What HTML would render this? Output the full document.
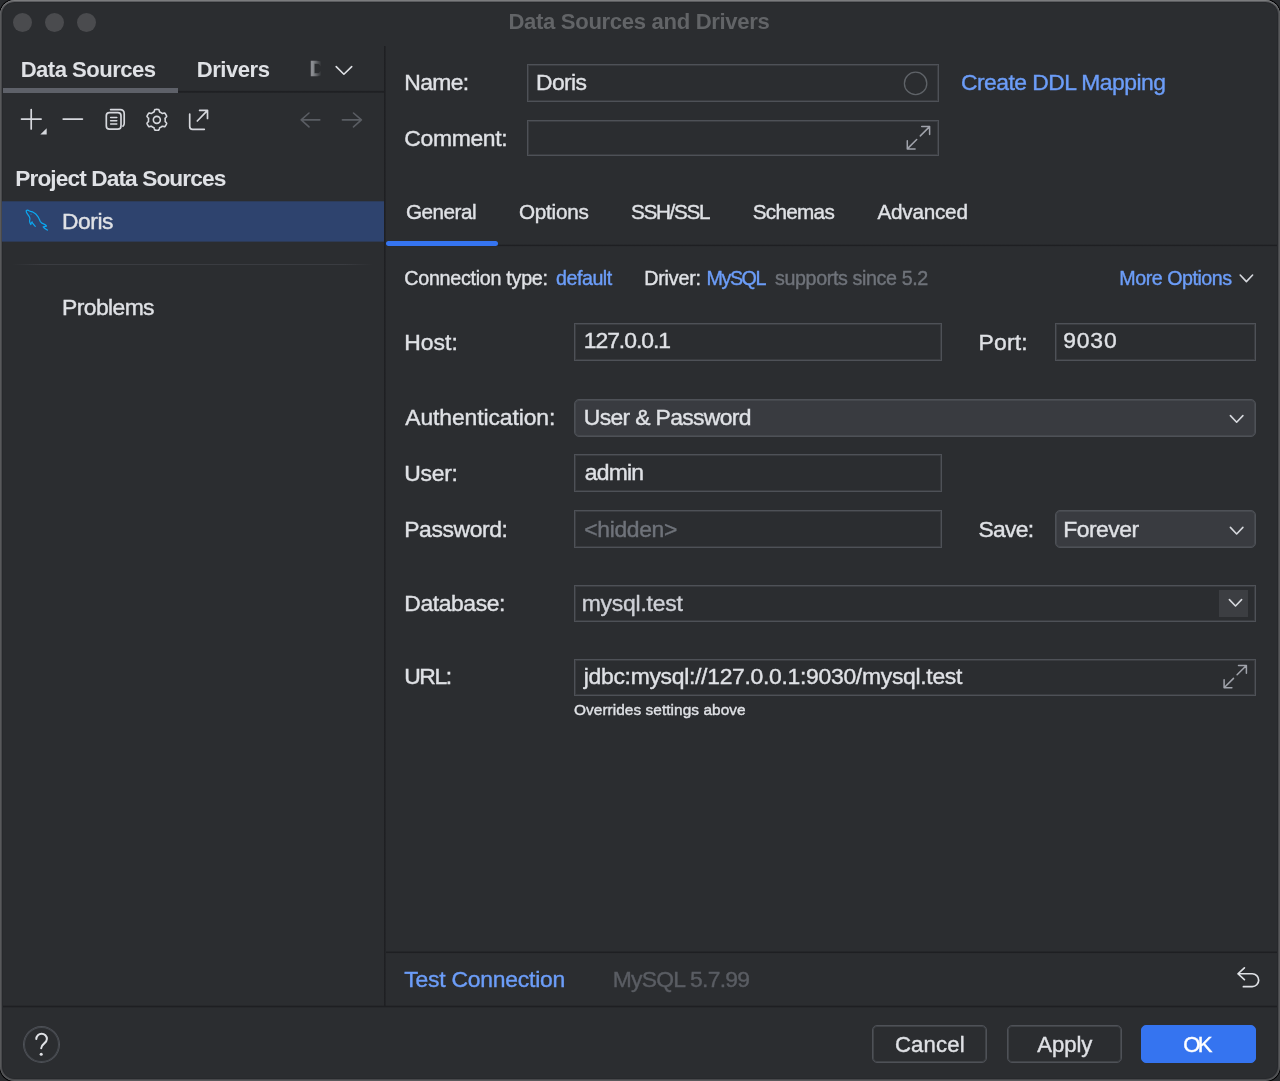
<!DOCTYPE html>
<html lang="en"><head><meta charset="utf-8"><title>Data Sources and Drivers</title>
<style>
html,body{margin:0;padding:0}
body{width:1280px;height:1081px;overflow:hidden;background:#292b2e;font-family:"Liberation Sans",sans-serif;position:relative}
#win{position:absolute;left:0;top:0;width:1280px;height:1081px;box-sizing:border-box;background:#2b2d30;border-radius:14.5px;overflow:hidden;box-shadow:0 0 0 1px #050506}
#win:after{content:"";position:absolute;left:0;top:0;right:0;bottom:0;border-radius:14.5px;box-sizing:border-box;pointer-events:none;box-shadow:inset 0 1px 0 0 #7b7c7e,inset 0 2px 0 0 #5b5c5f,inset 0 0 0 1px #58595b,inset 0 0 0 2px #47484b,inset 0 0 0 3px #27292c}
.t{position:absolute;white-space:nowrap;display:block;-webkit-text-stroke:0.4px currentColor;-webkit-font-smoothing:antialiased}
#txt{position:absolute;left:0;top:0;width:1280px;height:1081px;will-change:transform;z-index:4}
.a{position:absolute;box-sizing:border-box}
.in{position:absolute;box-sizing:border-box;border:1px solid #4e5157;background:#2b2d30;box-shadow:inset 0 0 0 1px rgba(78,81,87,.42)}
.dd{position:absolute;box-sizing:border-box;border:1px solid #4e5157;background:#393b40;border-radius:5px;box-shadow:inset 0 0 0 1px rgba(78,81,87,.6)}
.btn{position:absolute;box-sizing:border-box;border:1px solid #4e5157;border-radius:5px;background:#2b2d30;box-shadow:inset 0 0 0 1px rgba(78,81,87,.6)}
svg{position:absolute;overflow:visible;z-index:3}
</style></head>
<body>
<div id="win">
<div class="a" style="left:12.70px;top:12.70px;width:19.20px;height:19.20px;background:#4a4b4e;border-radius:50%"></div>
<div class="a" style="left:44.80px;top:12.70px;width:19.20px;height:19.20px;background:#4a4b4e;border-radius:50%"></div>
<div class="a" style="left:76.65px;top:12.70px;width:19.20px;height:19.20px;background:#4a4b4e;border-radius:50%"></div>
<div class="a" style="left:0.00px;top:90.00px;width:384.00px;height:3.00px;background:linear-gradient(180deg,rgba(30,31,34,0.15) 0 1px,rgba(30,31,34,0.95) 1px 2px,rgba(30,31,34,0.7) 2px 3px)"></div>
<div class="a" style="left:0.00px;top:88.40px;width:177.50px;height:4.20px;background:#5e6169;"></div>
<div class="a" style="left:383.00px;top:46.00px;width:3.00px;height:960.00px;background:linear-gradient(90deg,rgba(30,31,34,0) 0 1px,rgba(30,31,34,0.95) 1px 2px,rgba(30,31,34,0.6) 2px 3px)"></div>
<div class="a" style="left:2.00px;top:202.00px;width:382.00px;height:39.00px;background:#2e436e;z-index:2;box-shadow:0 -1px 0 rgba(46,67,110,.7),0 1px 0 rgba(46,67,110,.6)"></div>
<div class="a" style="left:12.00px;top:264.20px;width:361.00px;height:1.20px;background:linear-gradient(90deg,rgba(57,59,64,0) 0,#3a3c41 8%,#3a3c41 92%,rgba(57,59,64,0) 100%);"></div>
<div class="in" style="left:526.50px;top:63.75px;width:412.70px;height:38.45px;"></div>
<div class="in" style="left:526.50px;top:120.00px;width:412.70px;height:36.40px;"></div>
<div class="in" style="left:574.30px;top:323.20px;width:367.90px;height:37.80px;"></div>
<div class="in" style="left:1054.50px;top:323.20px;width:201.50px;height:37.80px;"></div>
<div class="dd" style="left:574.30px;top:398.50px;width:681.70px;height:38.00px;"></div>
<div class="in" style="left:574.30px;top:454.40px;width:367.90px;height:37.80px;"></div>
<div class="in" style="left:574.30px;top:510.40px;width:367.90px;height:37.80px;"></div>
<div class="dd" style="left:1054.50px;top:510.30px;width:201.50px;height:38.20px;"></div>
<div class="in" style="left:574.30px;top:585.30px;width:681.70px;height:36.70px;"></div>
<div class="a" style="left:1219.20px;top:590.00px;width:28.80px;height:27.30px;background:#3c3e42;"></div>
<div class="in" style="left:574.30px;top:659.20px;width:681.70px;height:36.80px;"></div>
<div class="a" style="left:386.00px;top:244.00px;width:894.00px;height:3.00px;background:linear-gradient(180deg,rgba(30,31,34,0.35) 0 1px,rgba(30,31,34,1) 1px 2px,rgba(30,31,34,0.15) 2px 3px)"></div>
<div class="a" style="left:386.00px;top:241.30px;width:111.80px;height:5.20px;background:#3574f0;border-radius:2.6px"></div>
<div class="a" style="left:386.00px;top:951.00px;width:894.00px;height:3.00px;background:linear-gradient(180deg,rgba(30,31,34,0.5) 0 1px,rgba(30,31,34,1) 1px 2px,rgba(30,31,34,0.1) 2px 3px)"></div>
<div class="a" style="left:0.00px;top:1005.00px;width:1280.00px;height:3.00px;background:linear-gradient(180deg,rgba(30,31,34,0.35) 0 1px,rgba(30,31,34,1) 1px 2px,rgba(30,31,34,0.35) 2px 3px)"></div>
<div class="btn" style="left:872.10px;top:1025.30px;width:115.10px;height:38.10px;"></div>
<div class="btn" style="left:1006.70px;top:1025.30px;width:114.90px;height:38.10px;"></div>
<div class="btn" style="left:1140.90px;top:1025.30px;width:115.20px;height:38.10px;background:#3574f0;border-color:#3574f0;box-shadow:none"></div>
<div class="a" style="left:23.00px;top:1025.70px;width:37.00px;height:37.10px;border:1px solid #4e5157;border-radius:50%;box-shadow:inset 0 0 0 1px rgba(78,81,87,.8)"></div>
<svg style="left:0;top:0" width="1280" height="1081" viewBox="0 0 1280 1081" fill="none" stroke-linecap="round" stroke-linejoin="round" ><path d="M21.5 119.1H41.1M31.2 109.5V128.9" stroke="#d6d8dd" stroke-width="1.7" fill="none" /><path d="M46.7 128.2V134.5H40.3Z" fill="#d6d8dd" stroke="none"/><path d="M63.2 119.1H82.4" stroke="#d6d8dd" stroke-width="1.7" fill="none" /><path d="M109.5 112.55H117.8A3.2 3.2 0 0 1 121 115.75V126A3.2 3.2 0 0 1 117.8 129.2H109.5A3.2 3.2 0 0 1 106.3 126V115.75A3.2 3.2 0 0 1 109.5 112.55Z" stroke="#d6d8dd" stroke-width="1.7" fill="none" /><path d="M110.6 109.6H120.4A3.8 3.8 0 0 1 124.2 113.4V123.6Q124.2 125.2 123 126.2" stroke="#d6d8dd" stroke-width="1.7" fill="none" /><path d="M110.6 117.5H116.8M110.6 120.7H116.8M110.6 123.9H116.8" stroke="#d6d8dd" stroke-width="1.5" fill="none" /><path d="M165.18 119.85 L165.18 119.63 L165.17 119.41 L165.15 119.19 L165.13 118.98 L165.11 118.76 L165.08 118.54 L165.04 118.33 L165.26 118.06 L165.59 117.75 L165.91 117.42 L166.22 117.07 L166.51 116.70 L166.68 116.36 L166.59 116.11 L166.48 115.85 L166.38 115.60 L166.26 115.35 L166.14 115.11 L166.01 114.86 L165.88 114.62 L165.74 114.39 L165.59 114.16 L165.44 113.93 L165.28 113.71 L165.12 113.49 L164.95 113.27 L164.78 113.06 L164.39 113.04 L163.93 113.11 L163.48 113.20 L163.03 113.32 L162.60 113.44 L162.25 113.50 L162.08 113.36 L161.91 113.23 L161.74 113.09 L161.56 112.97 L161.38 112.85 L161.19 112.73 L161.01 112.62 L160.81 112.51 L160.62 112.41 L160.42 112.31 L160.23 112.22 L160.03 112.14 L159.82 112.05 L159.62 111.98 L159.49 111.65 L159.39 111.22 L159.26 110.77 L159.12 110.33 L158.95 109.89 L158.73 109.57 L158.46 109.53 L158.19 109.49 L157.92 109.46 L157.65 109.43 L157.38 109.41 L157.10 109.40 L156.83 109.40 L156.56 109.40 L156.28 109.41 L156.01 109.43 L155.74 109.46 L155.47 109.49 L155.20 109.53 L154.93 109.57 L154.71 109.89 L154.54 110.33 L154.40 110.77 L154.27 111.22 L154.17 111.65 L154.04 111.98 L153.84 112.05 L153.63 112.14 L153.43 112.22 L153.24 112.31 L153.04 112.41 L152.85 112.51 L152.66 112.62 L152.47 112.73 L152.28 112.85 L152.10 112.97 L151.92 113.09 L151.75 113.23 L151.58 113.36 L151.41 113.50 L151.06 113.44 L150.63 113.32 L150.18 113.20 L149.73 113.11 L149.27 113.04 L148.88 113.06 L148.71 113.27 L148.54 113.49 L148.38 113.71 L148.22 113.93 L148.07 114.16 L147.92 114.39 L147.78 114.62 L147.65 114.86 L147.52 115.11 L147.40 115.35 L147.28 115.60 L147.18 115.85 L147.07 116.11 L146.98 116.36 L147.15 116.70 L147.44 117.07 L147.75 117.42 L148.07 117.75 L148.40 118.06 L148.62 118.33 L148.58 118.54 L148.55 118.76 L148.53 118.98 L148.51 119.19 L148.49 119.41 L148.48 119.63 L148.48 119.85 L148.48 120.07 L148.49 120.29 L148.51 120.51 L148.53 120.72 L148.55 120.94 L148.58 121.16 L148.62 121.37 L148.40 121.64 L148.07 121.95 L147.75 122.28 L147.44 122.63 L147.15 123.00 L146.98 123.34 L147.07 123.59 L147.18 123.85 L147.28 124.10 L147.40 124.35 L147.52 124.59 L147.65 124.84 L147.78 125.07 L147.92 125.31 L148.07 125.54 L148.22 125.77 L148.38 125.99 L148.54 126.21 L148.71 126.43 L148.88 126.64 L149.27 126.66 L149.73 126.59 L150.18 126.50 L150.63 126.38 L151.06 126.26 L151.41 126.20 L151.58 126.34 L151.75 126.47 L151.92 126.61 L152.10 126.73 L152.28 126.85 L152.47 126.97 L152.66 127.08 L152.85 127.19 L153.04 127.29 L153.24 127.39 L153.43 127.48 L153.63 127.56 L153.84 127.65 L154.04 127.72 L154.17 128.05 L154.27 128.48 L154.40 128.93 L154.54 129.37 L154.71 129.81 L154.93 130.13 L155.20 130.17 L155.47 130.21 L155.74 130.24 L156.01 130.27 L156.28 130.29 L156.56 130.30 L156.83 130.30 L157.10 130.30 L157.38 130.29 L157.65 130.27 L157.92 130.24 L158.19 130.21 L158.46 130.17 L158.73 130.13 L158.95 129.81 L159.12 129.37 L159.26 128.93 L159.39 128.48 L159.49 128.05 L159.62 127.72 L159.82 127.65 L160.03 127.56 L160.23 127.48 L160.42 127.39 L160.62 127.29 L160.81 127.19 L161.01 127.08 L161.19 126.97 L161.38 126.85 L161.56 126.73 L161.74 126.61 L161.91 126.47 L162.08 126.34 L162.25 126.20 L162.60 126.26 L163.03 126.38 L163.48 126.50 L163.93 126.59 L164.39 126.66 L164.78 126.64 L164.95 126.43 L165.12 126.21 L165.28 125.99 L165.44 125.77 L165.59 125.54 L165.74 125.31 L165.88 125.07 L166.01 124.84 L166.14 124.59 L166.26 124.35 L166.38 124.10 L166.48 123.85 L166.59 123.59 L166.68 123.34 L166.51 123.00 L166.22 122.63 L165.91 122.28 L165.59 121.95 L165.26 121.64 L165.04 121.37 L165.08 121.16 L165.11 120.94 L165.13 120.72 L165.15 120.51 L165.17 120.29 L165.18 120.07Z" stroke="#d6d8dd" stroke-width="1.6" fill="none" /><circle cx="156.83" cy="119.85" r="3.5" stroke="#d6d8dd" stroke-width="1.6"/><path d="M189.7 114V126.4A2.9 2.9 0 0 0 192.6 129.3H204.3" stroke="#d6d8dd" stroke-width="1.7" fill="none" /><path d="M197.3 121L207.5 110.4M199.6 110.4H207.5V118.4" stroke="#d6d8dd" stroke-width="1.7" fill="none" /><path d="M319.8 119.9H301.2M309 113L301.2 119.9L309 126.9" stroke="#5a5d63" stroke-width="1.6" fill="none" /><path d="M342.4 119.9H361.4M353.5 113L361.4 119.9L353.5 126.9" stroke="#5a5d63" stroke-width="1.6" fill="none" /><path d="M336.2 66.6L343.9 74.2L351.7 66.6" stroke="#dfe1e5" stroke-width="1.6" fill="none" /><circle cx="915.6" cy="83.4" r="11.2" stroke="#5f6368" stroke-width="1.3"/><path d="M921.7 126.6H929.6V134.4M929.6 126.6L920.3000000000001 135.9M907.3000000000001 140.79999999999998V148.9H915.1M907.3000000000001 148.9L916.7 139.5" stroke="#a0a3ab" stroke-width="1.5" fill="none" /><path d="M1238.5 665.5H1246.4V673.3M1246.4 665.5L1237.1000000000001 674.8M1224.1000000000001 679.7V687.8H1231.9M1224.1000000000001 687.8L1233.5 678.4" stroke="#a0a3ab" stroke-width="1.5" fill="none" /><path d="M1230.4 415.6L1236.65 422.2L1242.9 415.6" stroke="#d6d8dd" stroke-width="1.6" fill="none" /><path d="M1230.4 527.4L1236.65 534.0L1242.9 527.4" stroke="#d6d8dd" stroke-width="1.6" fill="none" /><path d="M1229.4 599.6L1235.5 606.0L1241.6 599.6" stroke="#d6d8dd" stroke-width="1.6" fill="none" /><path d="M1240.2 275.0L1246.4 281.6L1252.6 275.0" stroke="#d6d8dd" stroke-width="1.6" fill="none" /><path d="M1244.4 967.8L1238 973.75L1244.4 979.7M1238 973.75H1252.2A6.45 6.45 0 0 1 1252.2 986.65H1243.4" stroke="#dfe1e5" stroke-width="1.7" fill="none" /><path d="M36.3 1038.9A5.3 5.3 0 0 1 46.9 1039C46.9 1043.6 41.2 1043.6 41.2 1048.2" stroke="#dfe1e5" stroke-width="2" fill="none" /><circle cx="41.2" cy="1054.2" r="1.55" fill="#dfe1e5" stroke="none"/><path d="M25.6 210.3C26.4 209.2 27.6 209.4 28.6 210.2C30 211.2 31.6 211.2 33 211.9C35 212.9 36.8 214.6 38 216.4C39.2 218.2 39.8 220.2 40.5 221.6C41.3 223.1 42.8 223.8 44.4 224.4C45.6 224.9 46.6 225.6 47 226.4L43.5 227.2C44.6 228.6 46.4 229.6 48 230.6M25.6 210.3C25.6 211.4 26.1 212.4 26.7 213.3C27.6 214.6 28.6 215.6 29.1 216.8C29.6 217.9 29.8 218.6 29.5 219.6C29.2 220.6 29 221.2 29.4 222.2C29.7 223.1 30 223.9 30.5 224.8C30.7 223.6 31.1 222.7 31.8 221.9C32 222.8 32.5 223.5 33 224.1C33.7 225 34.4 225.9 35.2 226.7" stroke="#0ba7f0" stroke-width="1.3" fill="none" transform="translate(36.6 220) scale(0.95) translate(-36.6 -220)"/><circle cx="31" cy="214.2" r="0.6" fill="#2b78b8" stroke="none"/></svg>
<span class="t" style="left:309.6px;top:55.6px;font-size:22.3px;line-height:26px;font-weight:700;width:11.6px;overflow:hidden;color:#8b8d92;-webkit-mask-image:linear-gradient(90deg,#000 25%,transparent 105%);mask-image:linear-gradient(90deg,#000 25%,transparent 105%)">D</span>
<div id="txt">
<span class="t" style="left:508.50px;top:7px;font-size:22.1px;line-height:29px;letter-spacing:-0.332px;color:#626467;font-weight:700;-webkit-text-stroke:0">Data Sources and Drivers</span>
<span class="t" style="left:20.70px;top:55px;font-size:22.1px;line-height:29px;letter-spacing:-0.539px;color:#dfe1e5;font-weight:700;-webkit-text-stroke:0">Data Sources</span>
<span class="t" style="left:196.70px;top:55px;font-size:22.1px;line-height:29px;letter-spacing:-0.477px;color:#dfe1e5;font-weight:700;-webkit-text-stroke:0">Drivers</span>
<span class="t" style="left:15.25px;top:163px;font-size:22.7px;line-height:30px;letter-spacing:-0.906px;color:#dfe1e5;font-weight:700;-webkit-text-stroke:0">Project Data Sources</span>
<span class="t" style="left:62.10px;top:206px;font-size:22.8px;line-height:30px;letter-spacing:-0.450px;color:#dfe1e5">Doris</span>
<span class="t" style="left:62.10px;top:292px;font-size:22.9px;line-height:30px;letter-spacing:-0.605px;color:#dfe1e5">Problems</span>
<span class="t" style="left:404.25px;top:67px;font-size:22.9px;line-height:30px;letter-spacing:-0.640px;color:#dfe1e5">Name:</span>
<span class="t" style="left:536.00px;top:67px;font-size:22.9px;line-height:30px;letter-spacing:-0.617px;color:#dfe1e5">Doris</span>
<span class="t" style="left:404.25px;top:123px;font-size:22.9px;line-height:30px;letter-spacing:-0.317px;color:#dfe1e5">Comment:</span>
<span class="t" style="left:961.00px;top:67px;font-size:22.9px;line-height:30px;letter-spacing:-0.547px;color:#6c9df8">Create DDL Mapping</span>
<span class="t" style="left:406.00px;top:198px;font-size:20.7px;line-height:27px;letter-spacing:-0.500px;color:#dfe1e5">General</span>
<span class="t" style="left:519.00px;top:198px;font-size:20.7px;line-height:27px;letter-spacing:-0.242px;color:#dfe1e5">Options</span>
<span class="t" style="left:631.00px;top:198px;font-size:20.7px;line-height:27px;letter-spacing:-1.314px;color:#dfe1e5">SSH/SSL</span>
<span class="t" style="left:752.70px;top:198px;font-size:20.7px;line-height:27px;letter-spacing:-0.699px;color:#dfe1e5">Schemas</span>
<span class="t" style="left:877.40px;top:198px;font-size:20.7px;line-height:27px;letter-spacing:-0.215px;color:#dfe1e5">Advanced</span>
<span class="t" style="left:404.25px;top:265px;font-size:19.7px;line-height:26px;letter-spacing:-0.269px;color:#dfe1e5">Connection type:</span>
<span class="t" style="left:556.00px;top:265px;font-size:19.7px;line-height:26px;letter-spacing:-0.482px;color:#6c9df8">default</span>
<span class="t" style="left:644.20px;top:265px;font-size:19.7px;line-height:26px;letter-spacing:-0.183px;color:#dfe1e5">Driver:</span>
<span class="t" style="left:706.60px;top:265px;font-size:19.7px;line-height:26px;letter-spacing:-1.472px;color:#6c9df8">MySQL</span>
<span class="t" style="left:775.00px;top:265px;font-size:19.7px;line-height:26px;letter-spacing:-0.384px;color:#6f737a">supports since 5.2</span>
<span class="t" style="left:1119.30px;top:265px;font-size:19.7px;line-height:26px;letter-spacing:-0.484px;color:#6c9df8">More Options</span>
<span class="t" style="left:404.25px;top:327px;font-size:22.9px;line-height:30px;letter-spacing:0.046px;color:#dfe1e5">Host:</span>
<span class="t" style="left:583.75px;top:325px;font-size:22.9px;line-height:30px;letter-spacing:-1.029px;color:#dfe1e5">127.0.0.1</span>
<span class="t" style="left:978.60px;top:327px;font-size:22.9px;line-height:30px;letter-spacing:0.155px;color:#dfe1e5">Port:</span>
<span class="t" style="left:1063.20px;top:325px;font-size:22.9px;line-height:30px;letter-spacing:0.836px;color:#dfe1e5">9030</span>
<span class="t" style="left:405.25px;top:402px;font-size:22.9px;line-height:30px;letter-spacing:-0.095px;color:#dfe1e5">Authentication:</span>
<span class="t" style="left:583.75px;top:402px;font-size:22.9px;line-height:30px;letter-spacing:-0.649px;color:#dfe1e5">User &amp; Password</span>
<span class="t" style="left:404.25px;top:458px;font-size:22.9px;line-height:30px;letter-spacing:-0.270px;color:#dfe1e5">User:</span>
<span class="t" style="left:584.75px;top:457px;font-size:22.9px;line-height:30px;letter-spacing:-0.779px;color:#dfe1e5">admin</span>
<span class="t" style="left:404.25px;top:514px;font-size:22.9px;line-height:30px;letter-spacing:-0.407px;color:#dfe1e5">Password:</span>
<span class="t" style="left:584.25px;top:514px;font-size:22.9px;line-height:30px;letter-spacing:-0.337px;color:#6f737a">&lt;hidden&gt;</span>
<span class="t" style="left:978.60px;top:514px;font-size:22.9px;line-height:30px;letter-spacing:-0.769px;color:#dfe1e5">Save:</span>
<span class="t" style="left:1063.20px;top:514px;font-size:22.9px;line-height:30px;letter-spacing:-0.474px;color:#dfe1e5">Forever</span>
<span class="t" style="left:404.25px;top:588px;font-size:22.9px;line-height:30px;letter-spacing:-0.405px;color:#dfe1e5">Database:</span>
<span class="t" style="left:581.75px;top:588px;font-size:22.9px;line-height:30px;letter-spacing:-0.213px;color:#ced0d6">mysql.test</span>
<span class="t" style="left:404.25px;top:661px;font-size:22.9px;line-height:30px;letter-spacing:-1.431px;color:#dfe1e5">URL:</span>
<span class="t" style="left:583.75px;top:661px;font-size:22.9px;line-height:30px;letter-spacing:-0.290px;color:#dfe1e5">jdbc:mysql://127.0.0.1:9030/mysql.test</span>
<span class="t" style="left:574.00px;top:699px;font-size:15.4px;line-height:21px;letter-spacing:0.058px;color:#dfe1e5">Overrides settings above</span>
<span class="t" style="left:404.30px;top:964px;font-size:22.9px;line-height:30px;letter-spacing:-0.222px;color:#6c9df8">Test Connection</span>
<span class="t" style="left:612.70px;top:964px;font-size:22.9px;line-height:30px;letter-spacing:-0.735px;color:#5a5d63">MySQL 5.7.99</span>
<span class="t" style="left:895.00px;top:1030px;font-size:22.1px;line-height:29px;letter-spacing:0.167px;color:#dfe1e5">Cancel</span>
<span class="t" style="left:1037.20px;top:1030px;font-size:22.1px;line-height:29px;letter-spacing:-0.030px;color:#dfe1e5">Apply</span>
<span class="t" style="left:1183.20px;top:1030px;font-size:22.1px;line-height:29px;letter-spacing:-2.685px;color:#ffffff">OK</span>
</div>
</div>
</body></html>
